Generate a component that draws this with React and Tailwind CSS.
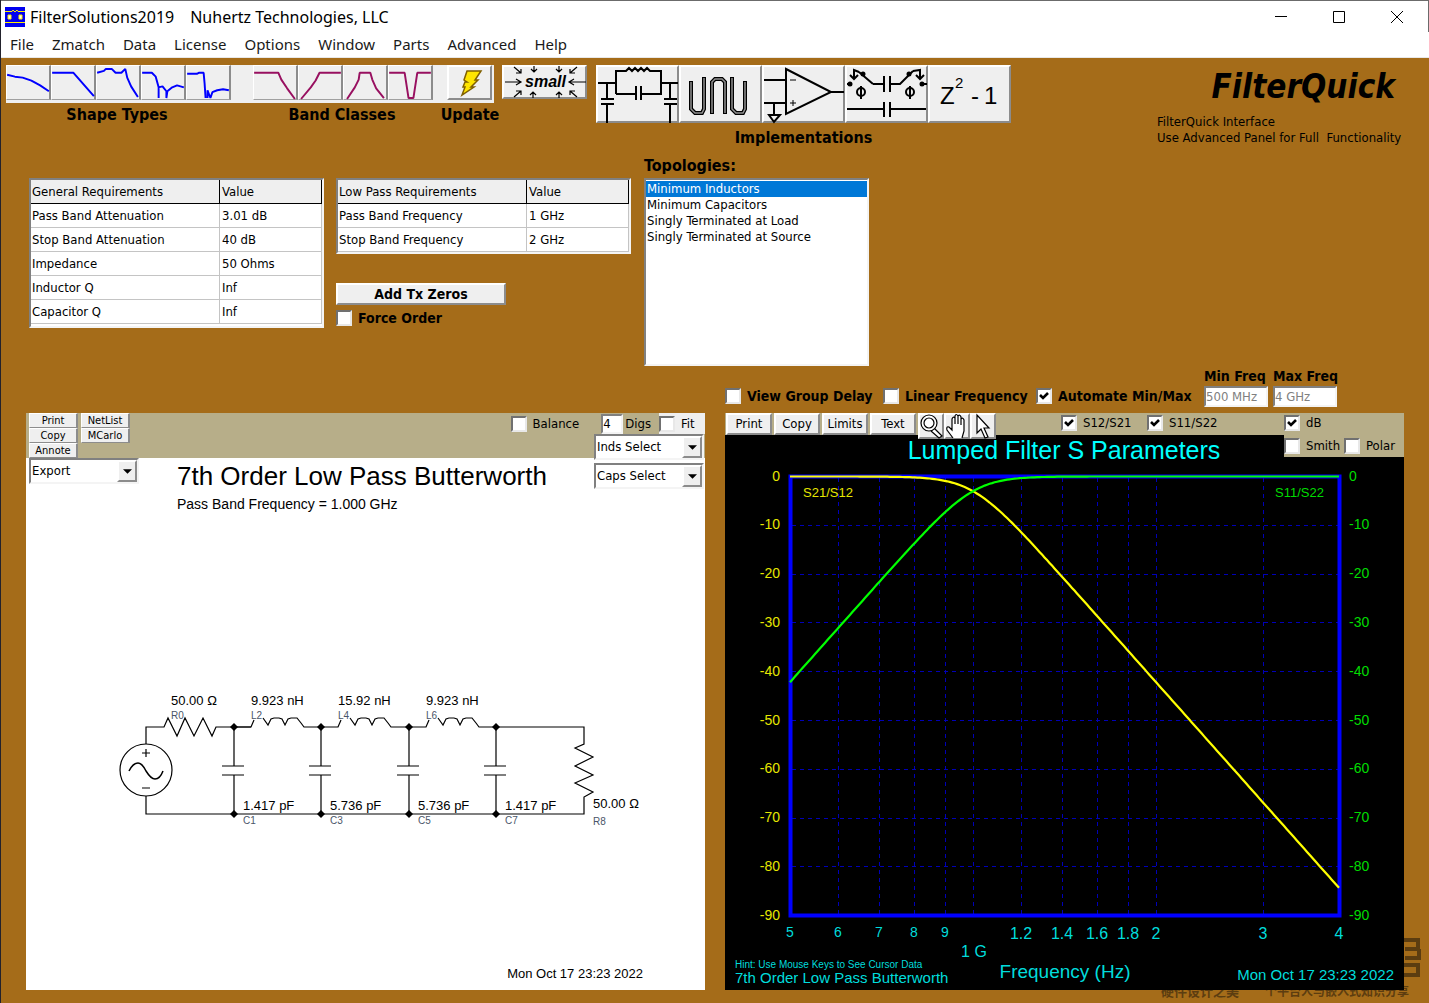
import React from "react";

const UI = "font-['DejaVu_Sans_Condensed','Noto_Sans',sans-serif]";
const BEVEL =
  "border-2 border-t-white border-l-white border-r-[#8c8c8c] border-b-[#8c8c8c] bg-[#efefef]";
const SUNKEN =
  "border-2 border-t-[#808080] border-l-[#808080] border-r-[#f4f4f4] border-b-[#f4f4f4] bg-white";

const MENUS = ["File", "Zmatch", "Data", "License", "Options", "Window", "Parts", "Advanced", "Help"];

const SHAPES = [
  { name: "Bessel", d: "M0 9L8 11L16 12L25 15L34 20L43 26" },
  { name: "Butterworth", d: "M0 7H22L43 31" },
  { name: "Chebyshev", d: "M0 7L7 5L9 3H15L19 7H25L29 3L31 12L35 21L42 32" },
  { name: "Hourglass", d: "M0 7H10L14 11L17 22V33M17 22L21 21L25 26V33L26 26L31 22L36 20L43 22" },
  { name: "Elliptic", d: "M0 8H10L12 7H17L18 18L19 33M21 33V25L24 33L26 27L31 25L37 24L43 25" },
];

const BANDS = [
  { name: "Low pass", d: "M0 7H25L28 14L34 23L42 34" },
  { name: "High pass", d: "M2 34L12 22L17 15L21 7H43" },
  { name: "Band pass", d: "M3 34L11 22L15 14L16 7H27L29 14L33 23L41 33" },
  { name: "Band stop", d: "M0 7H16L20 33H25L29 7H43" },
];

function CurveButton({ name, d, color }) {
  return (
    <button
      aria-label={name}
      className="h-[35px] w-[45px] border-t border-l border-r-2 border-b border-t-white border-l-white border-r-[#8c8c8c] border-b-[#a0a0a0] bg-[#efefef]"
    >
      <svg viewBox="0 0 43 34" className="block h-full w-full overflow-visible">
        <path d={d} fill="none" stroke={color} strokeWidth="2" strokeLinejoin="bevel" />
      </svg>
    </button>
  );
}

function Check({ label, checked = false, bold = false, className = "" }) {
  return (
    <label
      className={`flex items-center gap-[6px] whitespace-nowrap ${bold ? "text-sm font-bold leading-4" : "text-[13px] leading-4"} ${className}`}
    >
      <span className="grid h-4 w-4 shrink-0">
        <input
          type="checkbox"
          defaultChecked={checked}
          className="peer col-start-1 row-start-1 h-4 w-4 appearance-none border-2 border-t-[#707070] border-l-[#707070] border-r-[#e8e8e8] border-b-[#e8e8e8] bg-white"
        />
        <svg viewBox="0 0 16 16" className="pointer-events-none invisible col-start-1 row-start-1 h-4 w-4 peer-checked:visible">
          <path d="M4 7L7 10L12 5" fill="none" stroke="#000" strokeWidth="2.6" />
        </svg>
      </span>
      {label}
    </label>
  );
}

function Combo({ label }) {
  return (
    <div className={`grid h-[26px] w-[110px] text-[13px] ${SUNKEN} border-r-[#b0b0b0] border-b-[#d0d0d0]`}>
      <select aria-label={label} className="col-start-1 row-start-1 w-full appearance-none bg-white pl-px leading-4 outline-none">
        <option>{label}</option>
      </select>
      <span className={`pointer-events-none col-start-1 row-start-1 flex w-5 items-center justify-center justify-self-end ${BEVEL}`}>
        <svg viewBox="0 0 10 5" className="h-[5px] w-[9px] shrink-0">
          <path d="M0 0H10L5 5Z" />
        </svg>
      </span>
    </div>
  );
}

function Requirements({ title, rows, pad }) {
  return (
    <table className={`w-[295px] table-fixed border-separate border-spacing-0 text-[13px] leading-4 ${SUNKEN}`}>
      <thead>
        <tr className="h-6 bg-[#efefef] text-left">
          <th className="w-[189px] border-r border-b border-black px-px pt-px font-normal">{title}</th>
          <th className="border-r border-b border-black px-[2px] pt-px font-normal">Value</th>
        </tr>
      </thead>
      <tbody>
        {rows.map(([name, value]) => (
          <tr key={name} className="h-6">
            <td className="border-r border-b border-[#c4c4c4] px-px">{name}</td>
            <td className="border-r border-b border-[#c4c4c4] px-[2px]">{value}</td>
          </tr>
        ))}
        {pad && <tr className="h-[2px]"><td colSpan={2} className="p-0" /></tr>}
      </tbody>
    </table>
  );
}

function TinyButton({ children }) {
  return (
    <button className="h-[15px] w-[49px] border border-r-2 border-t-white border-l-white border-r-[#8c8c8c] border-b-[#8c8c8c] bg-[#efefef] text-[11px] leading-3">
      {children}
    </button>
  );
}

function ImplButton({ name, children }) {
  return (
    <button aria-label={name} className={`h-[58px] w-[83px] ${BEVEL}`}>
      <svg viewBox="2 2 79 54" className="block h-full w-full overflow-visible" fill="none" stroke="#000" strokeWidth="2">
        {children}
      </svg>
    </button>
  );
}

function Toolbar() {
  return (
    <header className="flex h-[100px] items-start pt-[7px] pl-[5px]">
      <div>
        <div className="flex h-[38px] w-[488px] items-start bg-[#efefef]">
          {SHAPES.map((s) => <CurveButton key={s.name} {...s} color="#0000ff" />)}
          <span className="ml-[22px] flex">
            {BANDS.map((b) => <CurveButton key={b.name} {...b} color="#981060" />)}
          </span>
          <button aria-label="Update" className={`ml-[14px] h-[35px] w-[45px] ${BEVEL}`}>
            <svg viewBox="2 2 41 31" className="block h-full w-full">
              <path d="M20 6H34L28 15H31L24 22H27L15 30L18 22H16L18 17H20L17 15Z" fill="#ffe500" stroke="#806000" strokeWidth="1.5" />
            </svg>
          </button>
        </div>
        <div className="flex pt-[2px] text-base font-bold leading-5">
          <span className="w-[222px] text-center">Shape Types</span>
          <span className="w-[228px] text-center">Band Classes</span>
          <span className="flex w-[28px] justify-center whitespace-nowrap">Update</span>
        </div>
      </div>
      <button aria-label="small" className={`ml-2 h-[34px] w-[85px] ${BEVEL}`}>
        <svg viewBox="2 2 81 30" className="block h-full w-full overflow-visible" fill="none" stroke="#000" strokeWidth="1.2">
          <path d="M3 17H19M14 14L19 17L14 20M84 17H67M72 14L67 17L72 20M12 2L19 8M19 4V8H14M12 32L19 26M14 26H19V30M75 2L68 8M68 4V8H73M75 32L68 26M73 26H68V30M32 1V7M29 4L32 7L35 4M57 1V7M54 4L57 7L60 4M31 33V27M28 30L31 27L34 30M57 33V27M54 30L57 27L60 30" />
          <text x="23" y="22" fontSize="16" fontWeight="bold" fontStyle="italic" fontFamily="Liberation Sans, sans-serif" fill="#000" stroke="none">small</text>
        </svg>
      </button>
      <div className="ml-[9px]">
        <div className="flex bg-[#efefef]">
          <ImplButton name="Lumped">
            <path d="M2 18H20M20 29V6H30L33 3L36 6L39 3L42 6L45 3L48 6L51 3L54 6H65V29H46M20 29H39M65 18H82M40 21V35M45 21V35M11 18V33M5 34H18M5 39H18M11 39V58M74 18V33M68 34H81M68 39H81M74 39V58" />
          </ImplButton>
          <ImplButton name="Distributed">
            <path d="M12 16V44L16 48H23L25 44V12M33 49V17L36 14H43L46 17V49M53 12V44L57 48H64L66 44V16" strokeWidth="4" />
            <path d="M12 17V44L16 48H23L25 44V13M33 48V17L36 14H43L46 17V48M53 13V44L57 48H64L66 44V17" stroke="#909090" strokeWidth="1.5" />
          </ImplButton>
          <ImplButton name="Active">
            <path d="M24 4V49L69 27ZM2 15H24M2 38H24M12 38V50M7 50H18L12 57ZM69 27H82" />
            <path d="M28 15H34M28 38H34M31 35V41" strokeWidth="1" />
          </ImplButton>
          <ImplButton name="Switched capacitor">
            <path d="M2 44H39M46 44H81M39 37V52M45 37V52M28 19H38M39 11V27M45 11V27M46 19H55L68 6M28 19L14 7M14 7L9 5V13M5 10L9 14L13 10M68 6L75 5V13M71 10L75 14L79 10M2 19H5M78 19H82" />
            <path d="M16 21V34M65 21V34" />
            <circle cx="16" cy="27" r="4" /><circle cx="65" cy="27" r="4" />
            <circle cx="5" cy="19" r="1.5" fill="#000" /><circle cx="77" cy="19" r="1.5" fill="#000" />
            <circle cx="18" cy="9" r="1.5" fill="#000" /><circle cx="64" cy="9" r="1.5" fill="#000" />
          </ImplButton>
          <ImplButton name="Digital">
            <g fill="#000" stroke="none" fontFamily="Liberation Sans, sans-serif">
              <text x="12" y="39" fontSize="24">Z</text>
              <text x="27" y="23" fontSize="15">2</text>
              <text x="43" y="39" fontSize="24">-</text>
              <text x="56" y="39" fontSize="24">1</text>
            </g>
          </ImplButton>
        </div>
        <p className="pt-[5px] text-center text-base font-bold leading-5">Implementations</p>
      </div>
      <div className="mr-5 ml-auto w-[252px] text-[13px] leading-4">
        <h1 className="pr-[14px] text-right text-[33px] leading-[44px] font-bold italic">FilterQuick</h1>
        <p className="pt-[5px]">FilterQuick Interface</p>
        <p className="whitespace-pre">Use Advanced Panel for Full  Functionality</p>
      </div>
    </header>
  );
}

const NODES = [234, 321, 409, 496];
const CAPS = [["C1", "1.417 pF"], ["C3", "5.736 pF"], ["C5", "5.736 pF"], ["C7", "1.417 pF"]];
const COILS = [["L2", "9.923 nH"], ["L4", "15.92 nH"], ["L6", "9.923 nH"]];

function Part({ x, y, value, refdes, drop = 13 }) {
  return (
    <>
      <text x={x} y={y} fontSize="13">{value}</text>
      <text x={x} y={y + drop} fontSize="10" fill="#4a5568">{refdes}</text>
    </>
  );
}

function Schematic() {
  return (
    <svg viewBox="26 680 679 160" className="block w-full" fontFamily="Liberation Sans, sans-serif">
      <g fill="none" stroke="#000" strokeWidth="1.2">
        <circle cx="146" cy="770" r="26" />
        <path d="M146 744V727H164L168 718L177 736L185 718L194 736L203 718L212 736L216 727H251M142 753H150M146 749V757M142 788H150M146 796V814H584V797L593 792L575 783L593 775L575 766L593 757L575 748L584 744V727H496" />
        <path d="M129 771Q133 763 138 763Q142 763 146 771Q151 779 155 779Q160 779 163 771" strokeWidth="1.5" />
        {COILS.map(([id], i) => (
          <path key={id} transform={`translate(${NODES[i]} 0)`} d="M0 727H17L20 720M29 718L34 725L37 719L40 718H45L48 719L51 725L54 719L57 718H63L67 723L70 727H87" />
        ))}
        {NODES.map((x) => (
          <path key={x} d={`M${x} 727V766M${x - 12} 766H${x + 10}M${x - 12} 775H${x + 10}M${x} 775V814`} />
        ))}
      </g>
      {NODES.map((x) => (
        <path key={x} d={`M${x - 4} 727l4 -4l4 4l-4 4ZM${x - 4} 814l4 -4l4 4l-4 4Z`} />
      ))}
      <Part x={171} y={705} value="50.00 Ω" refdes="R0" drop={14} />
      {COILS.map(([id, v], i) => <Part key={id} x={NODES[i] + 17} y={705} value={v} refdes={id} drop={14} />)}
      {CAPS.map(([id, v], i) => <Part key={id} x={NODES[i] + 9} y={810} value={v} refdes={id} drop={14} />)}
      <Part x={593} y={808} value="50.00 Ω" refdes="R8" drop={17} />
    </svg>
  );
}

const px = (f) => 790 + (549 * Math.log(f / 0.5)) / Math.log(8);
const py = (db) => 476.5 - db * 4.88;
const trace = (sign) =>
  Array.from({ length: 221 }, (_, i) => {
    const f = 0.5 * Math.pow(8, i / 220);
    const db = -10 * Math.log10(1 + Math.pow(f, 14 * sign));
    return `${px(f).toFixed(1)},${py(db).toFixed(1)}`;
  }).join(" ");
const S21 = trace(1);
const S11 = trace(-1);
const GRID = [0.6, 0.7, 0.8, 0.9, 1, 1.2, 1.4, 1.6, 1.8, 2, 3];
const DB = [0, -10, -20, -30, -40, -50, -60, -70, -80, -90];
const LOW = [[0.5, "5"], [0.6, "6"], [0.7, "7"], [0.8, "8"], [0.9, "9"]];
const HIGH = [[1.2, "1.2"], [1.4, "1.4"], [1.6, "1.6"], [1.8, "1.8"], [2, "2"], [3, "3"], [4, "4"]];

function Plot() {
  return (
    <svg viewBox="725 435 679 555" className="block w-full bg-black" fontFamily="Liberation Sans, sans-serif">
      <g stroke="#0000b8" strokeDasharray="4 4" fill="none">
        {GRID.map((f) => <path key={f} d={`M${Math.round(px(f)) + 0.5} 478V914`} />)}
        {DB.slice(1, -1).map((d) => <path key={d} d={`M792 ${Math.floor(py(d)) + 0.5}H1338`} />)}
      </g>
      <rect x="790.5" y="476.5" width="549" height="439" fill="none" stroke="#0000ff" strokeWidth="4" />
      <polyline points={S21} fill="none" stroke="#ffff00" strokeWidth="2.2" />
      <polyline points={S11} fill="none" stroke="#00ff00" strokeWidth="2.2" />
      <text x="1064" y="459" fontSize="25" fill="#00ffff" textAnchor="middle">Lumped Filter S Parameters</text>
      <g fontSize="14">
        <g fill="#e6e600">
          <text x="803" y="497" fontSize="13">S21/S12</text>
          {DB.map((d) => <text key={d} x="780" y={Math.round(py(d)) + 4} textAnchor="end">{d}</text>)}
        </g>
        <g fill="#00dc00">
          <text x="1275" y="497" fontSize="13">S11/S22</text>
          {DB.map((d) => <text key={d} x="1349" y={Math.round(py(d)) + 4}>{d}</text>)}
        </g>
      </g>
      <g fill="#00dcdc" textAnchor="middle">
        {LOW.map(([f, t]) => <text key={t} x={Math.round(px(f))} y="937" fontSize="14">{t}</text>)}
        {HIGH.map(([f, t]) => <text key={t} x={Math.round(px(f))} y="939" fontSize="16">{t}</text>)}
        <text x="974" y="957" fontSize="16">1 G</text>
        <text x="1065" y="978" fontSize="19">Frequency (Hz)</text>
      </g>
      <g fill="#00dcdc">
        <text x="735" y="968" fontSize="10">Hint: Use Mouse Keys to See Cursor Data</text>
        <text x="735" y="983" fontSize="15">7th Order Low Pass Butterworth</text>
        <text x="1394" y="980" fontSize="15" textAnchor="end">Mon Oct 17 23:23 2022</text>
      </g>
    </svg>
  );
}

function IconButton({ name, children }) {
  return (
    <button aria-label={name} className={`h-[26px] w-[26px] ${BEVEL}`}>
      <svg viewBox="2 2 22 22" className="block h-full w-full overflow-visible" fill="#fff" stroke="#000" strokeWidth="1.2">
        {children}
      </svg>
    </button>
  );
}

function SchematicPanel() {
  return (
    <section className="flex flex-col bg-white">
      <div className="flex h-[45px] items-start justify-between bg-[#b7ae89]">
        <div className="pl-[3px]">
          <div className="flex items-start gap-[3px]">
            <div className="flex flex-col">
              <TinyButton>Print</TinyButton>
              <TinyButton>Copy</TinyButton>
              <TinyButton>Annote</TinyButton>
            </div>
            <div className="flex flex-col">
              <TinyButton>NetList</TinyButton>
              <TinyButton>MCarlo</TinyButton>
            </div>
          </div>
          <Combo label="Export" />
        </div>
        <div className="flex flex-col items-end">
          <div className="flex h-[21px] items-center">
            <Check label="Balance" className="mr-[22px]" />
            <input aria-label="Digs" defaultValue="4" className={`mr-[2px] h-5 w-[22px] text-[13px] ${SUNKEN}`} />
            <span className="mr-2 text-[13px] leading-4">Digs</span>
            <Check label="Fit" className="h-full w-[46px] bg-[#efefef]" />
          </div>
          <div className="flex flex-col gap-[3px] pr-px">
            <Combo label="Inds Select" />
            <Combo label="Caps Select" />
          </div>
        </div>
      </div>
      <div className="pl-[151px] font-['Liberation_Sans',sans-serif]">
        <h2 className="text-[26px] leading-9">7th Order Low Pass Butterworth</h2>
        <p className="text-sm leading-5">Pass Band Frequency = 1.000 GHz</p>
      </div>
      <div className="flex flex-1 flex-col pt-[166px]"><Schematic /></div>
      <p className="pr-[62px] pb-[6px] text-right font-['Liberation_Sans',sans-serif] text-[13px] leading-5">Mon Oct 17 23:23 2022</p>
    </section>
  );
}

function PlotPanel() {
  return (
    <section className="relative z-10 bg-black">
      <div className="flex h-[22px] items-start bg-[#b7ae89] pl-px">
        {["Print", "Copy", "Limits", "Text"].map((t) => (
          <button key={t} className={`mr-[2px] h-[22px] w-[46px] text-[13px] leading-4 ${BEVEL}`}>{t}</button>
        ))}
        <div className="z-10 flex">
          <IconButton name="Zoom">
            <path d="M16 15L24 23L21 25L13 18" />
            <circle cx="11" cy="10" r="8" /><circle cx="11" cy="10" r="5" fill="none" />
          </IconButton>
          <IconButton name="Pan">
            <path d="M9 25L3 17Q2 13 5 14L8 17V6Q9 3 11 5V11V3Q12 0 14 3V11V3Q16 1 17 4V12V6Q19 4 20 7V18L18 25" />
          </IconButton>
          <IconButton name="Pointer">
            <path d="M7 2V20L11 16L15 25L18 24L14 15H19Z" />
          </IconButton>
        </div>
        <div className="ml-[65px] flex pt-[2px]">
          <Check label="S12/S21" checked className="w-[86px]" />
          <Check label="S11/S22" checked />
        </div>
      </div>
      <Plot />
      <div className="absolute top-0 right-0 flex h-11 w-[120px] flex-col justify-between bg-[#b7ae89] pt-[2px] pb-[3px]">
        <Check label="dB" checked />
        <div className="flex">
          <Check label="Smith" className="w-[60px]" />
          <Check label="Polar" />
        </div>
      </div>
    </section>
  );
}

export default function App() {
  return (
    <div className={`flex min-h-screen flex-col border-l border-[#22222c] bg-[#a56c19] text-black ${UI}`}>
      <div className="border-t border-[#6b6b6b] bg-white font-['Noto_Sans','Open_Sans',sans-serif] text-[15px]">
        <div className="flex h-[31px] items-center border-r border-[#6b6b6b] pl-1">
          <svg viewBox="0 0 20 20" className="mr-[5px] h-5 w-5">
            <path d="M0 0H20V20H0Z" fill="#0000f0" />
            <path d="M0 4.500H7L8 3L10 5L12 3L13 4.500H20M0 15.500H20" stroke="#ffee00" fill="none" />
            <path d="M3 8H6V12H3ZM14 8H17V12H14Z" fill="#fff" stroke="#ffee00" />
          </svg>
          <span className="text-base">FilterSolutions2019</span>
          <span className="ml-4 text-base">Nuhertz Technologies, LLC</span>
          <div className="mr-[2px] ml-auto flex">
            {[["Minimize", "M0 5.500H12"], ["Maximize", "M.5 .5H11.500V11.500H.5Z"], ["Close", "M0 0L12 12M12 0L0 12"]].map(([n, d]) => (
              <button key={n} aria-label={n} className="flex w-[58px] justify-center">
                <svg viewBox="0 0 12 12" className="h-3 w-3 overflow-visible"><path d={d} fill="none" stroke="#000" /></svg>
              </button>
            ))}
          </div>
        </div>
        <nav className="flex h-[26px] items-center gap-[18px] border-b border-[#e8e8e8] pl-[9px] text-[#1a1a1a]">
          {MENUS.map((m) => <button key={m}>{m}</button>)}
        </nav>
      </div>

      <Toolbar />

      <div className="flex items-start pl-7">
        <div className="pt-5">
          <Requirements
            title="General Requirements"
            pad
            rows={[["Pass Band Attenuation", "3.01 dB"], ["Stop Band Attenuation", "40 dB"], ["Impedance", "50 Ohms"], ["Inductor Q", "Inf"], ["Capacitor Q", "Inf"]]}
          />
        </div>
        <div className="ml-3 pt-5">
          <Requirements title="Low Pass Requirements" rows={[["Pass Band Frequency", "1 GHz"], ["Stop Band Frequency", "2 GHz"]]} />
          <button className={`mt-[29px] block h-[22px] w-[170px] text-sm leading-4 font-bold ${BEVEL}`}>Add Tx Zeros</button>
          <Check label="Force Order" bold className="pt-[5px]" />
        </div>
        <div className="ml-[13px]">
          <label htmlFor="topologies" className="block h-5 text-base leading-4 font-bold">Topologies:</label>
          <select
            id="topologies"
            size={4}
            defaultValue="Minimum Inductors"
            className={`block h-[188px] w-[225px] overflow-hidden pt-px text-[13px] outline-none ${SUNKEN}`}
          >
            {["Minimum Inductors", "Minimum Capacitors", "Singly Terminated at Load", "Singly Terminated at Source"].map((t) => (
              <option key={t} className="h-4 p-0 px-px leading-4 checked:bg-[linear-gradient(#0078d7,#0078d7)] checked:text-white">{t}</option>
            ))}
          </select>
        </div>
      </div>

      <div className="flex h-[47px] items-end pb-[6px] pl-[724px] text-sm font-bold">
        <Check label="View Group Delay" bold className="mb-[3px] w-[158px]" />
        <Check label="Linear Frequency" bold className="mb-[3px] w-[153px]" />
        <Check label="Automate Min/Max" bold checked className="mb-[3px] w-[168px]" />
        {[["Min Freq", "500 MHz"], ["Max Freq", "4 GHz"]].map(([l, v]) => (
          <label key={l} className="mr-[5px] w-16 leading-4 whitespace-nowrap">
            {l}
            <input disabled defaultValue={v} className={`mt-[2px] block h-[21px] w-full text-[13px] font-normal text-[#808080] ${SUNKEN}`} />
          </label>
        ))}
      </div>

      <main className="grid grid-cols-2 gap-5 px-[25px]">
        <SchematicPanel />
        <PlotPanel />
      </main>
      <footer className="relative -mt-[5px] flex h-[18px] justify-end gap-[26px] pr-5 font-['Noto_Sans_CJK_SC',sans-serif] leading-3 font-bold text-[#5c3d10]">
        <span className="text-[13px] leading-3">硬件设计之美</span>
        <span className="text-xs leading-3">个平台人与嵌入式知识分享</span>
        <svg viewBox="0 0 20 42" className="absolute right-2 bottom-6 h-[42px] w-5" fill="none" stroke="#5c3d10" strokeWidth="4">
          <path d="M2 3H17V12H4M4 21H18V12M2 28H17V38H2" />
        </svg>
      </footer>
    </div>
  );
}
